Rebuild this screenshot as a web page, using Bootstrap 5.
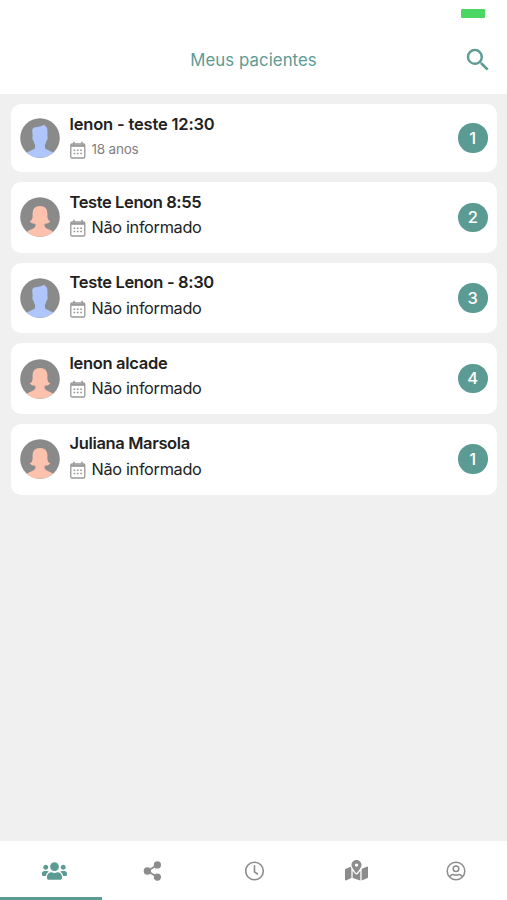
<!DOCTYPE html>
<html lang="pt-BR">
<head>
<meta charset="utf-8">
<meta name="viewport" content="width=device-width, initial-scale=1">
<title>Meus pacientes</title>
<link rel="stylesheet" href="https://cdn.jsdelivr.net/npm/bootstrap@5.3.0/dist/css/bootstrap.min.css">
<style>
:root{--teal:#5c9b93;--ink:#222;--muted:#8c8c8c}
body{font-family:Inter,"Liberation Sans",sans-serif;background:#f0f0f0;color:var(--ink)}
svg{display:block;flex-shrink:0}
.top-area{height:94px}
.charge{width:24px;height:9px;background:#4bd763;border-radius:1px;margin:8.5px 22.5px 0 auto}
.title-bar{height:58px;margin-top:13px;grid-template-columns:60px 1fr 60px}
.title-bar h1{font-size:16.8px;color:var(--teal);letter-spacing:.07px;line-height:22px;padding-top:1px}
.find{margin:1px 14px 0 auto}
.patients{padding:10px 10.5px;gap:9.8px}
.patient{height:70.8px;border-radius:10px;padding:0 9px 0 9.5px}
.patient.short{height:68.2px}
.info{margin-left:9.5px;height:100%;padding-top:8.6px}
.name{font-size:16.5px;line-height:22px;font-weight:600;white-space:nowrap}
.age{font-size:16.3px;line-height:22px;margin-top:3.4px;white-space:nowrap;letter-spacing:-.32px}
.age svg{margin:2px 6px 0 0}
.short .age{font-size:13.5px;color:#808080;margin-top:3px;letter-spacing:-.2px}
.count{width:29.5px;height:29.5px;background:var(--teal);font-size:16.5px;font-weight:500}
.tabs{height:59px;color:var(--muted)}
.tab{width:20%;color:inherit;padding-top:3px}
.tab.current{color:var(--teal)}
.tab-line{height:3px;width:102px;background:var(--teal)}
.n1{letter-spacing:-.17px}.n2{letter-spacing:-.4px}.n3{letter-spacing:-.34px}.n4{letter-spacing:-.31px}.n5{letter-spacing:-.35px}
</style>
<script src="https://cdn.jsdelivr.net/npm/bootstrap@5.3.0/dist/js/bootstrap.bundle.min.js"></script>
</head>
<body>
<svg width="0" height="0" class="position-absolute" aria-hidden="true">
<defs>
<clipPath id="disc"><circle cx="20" cy="20" r="19.8"/></clipPath>
<symbol id="man" viewBox="0 0 40 40"><circle cx="20" cy="20" r="19.8" fill="#8a8a8a"/><path clip-path="url(#disc)" fill="#aec6fc" d="M12.2 12.5Q12.3 9.5 15.5 9.2Q20 9 24.5 6.7Q25 8.6 26.6 9.1Q27.700 10 27.400 18.500Q28.100 19.200 27.500 20.800Q27.300 22.300 26.600 22.600Q26 25 24.900 26.800V29.500Q25.500 31.500 29.500 32.700Q33 33.500 34 36V40H6V36Q7 33.500 10.500 32.700Q14.500 31.500 15.100 29.500V26.800Q14 25 13.400 22.600Q12.700 22.300 12.500 20.800Q11.900 19.200 12.700 18.500Z"/></symbol>
<symbol id="woman" viewBox="0 0 40 40"><circle cx="20" cy="20" r="19.8" fill="#8a8a8a"/><path clip-path="url(#disc)" fill="#fdc2ad" d="M12.600 16Q12.800 8.900 20 8.900Q27.200 8.900 27.400 16V20.500Q27.700 23.200 30.300 24.600Q28.200 27 24.600 26.800V29Q25 31 29 32.500Q32.500 33.500 34 36V40H6V36Q7.500 33.500 11 32.500Q15 31 15.400 29V26.800Q11.800 27 9.700 24.600Q12.300 23.200 12.600 20.500Z"/></symbol>
<symbol id="cal" viewBox="0 0 16 18"><g fill="none" stroke="#999" stroke-width="1.3"><rect x=".8" y="3" width="14" height="14" rx="1.3"/><path d="M1 4.800h14" stroke-width="2"/><path d="M4 .7v3M12 .7v3" stroke-width="1.500"/></g><path stroke="#999" stroke-width="1.500" stroke-dasharray="1.700 1.600" d="M3.600 9.300h9M3.600 12.400h9"/></symbol>
</defs>
</svg>
<div class="d-flex flex-column vh-100 overflow-hidden">
<header class="top-area bg-white flex-shrink-0 d-flex flex-column">
<div class="charge flex-shrink-0"></div>
<div class="title-bar d-grid align-items-center">
<span></span>
<h1 class="m-0 text-center fw-normal">Meus pacientes</h1>
<svg class="find" width="30" height="30" viewBox="0 0 24 24" fill="#5c9b93"><path d="M15.5 14h-.79l-.28-.27A6.47 6.47 0 0 0 16 9.5 6.5 6.5 0 1 0 9.5 16c1.61 0 3.09-.59 4.23-1.57l.27.28v.79l5 4.99L20.49 19zm-6 0C7.01 14 5 11.99 5 9.5S7.01 5 9.5 5 14 7.01 14 9.5 11.99 14 9.5 14"/></svg>
</div>
</header>
<main class="patients d-flex flex-column flex-grow-1">
<article class="patient short bg-white d-flex align-items-center">
<svg width="40" height="40"><use href="#man"/></svg>
<div class="info flex-grow-1"><div class="name"><span class="n1">lenon - teste 12:30</span></div><div class="age d-flex align-items-center"><svg width="16" height="18"><use href="#cal"/></svg><span>18 anos</span></div></div>
<span class="count rounded-circle text-white d-flex align-items-center justify-content-center">1</span>
</article>
<article class="patient bg-white d-flex align-items-center">
<svg width="40" height="40"><use href="#woman"/></svg>
<div class="info flex-grow-1"><div class="name"><span class="n2">Teste Lenon 8:55</span></div><div class="age d-flex align-items-center"><svg width="16" height="18"><use href="#cal"/></svg><span>Não informado</span></div></div>
<span class="count rounded-circle text-white d-flex align-items-center justify-content-center">2</span>
</article>
<article class="patient bg-white d-flex align-items-center">
<svg width="40" height="40"><use href="#man"/></svg>
<div class="info flex-grow-1"><div class="name"><span class="n3">Teste Lenon - 8:30</span></div><div class="age d-flex align-items-center"><svg width="16" height="18"><use href="#cal"/></svg><span>Não informado</span></div></div>
<span class="count rounded-circle text-white d-flex align-items-center justify-content-center">3</span>
</article>
<article class="patient bg-white d-flex align-items-center">
<svg width="40" height="40"><use href="#woman"/></svg>
<div class="info flex-grow-1"><div class="name"><span class="n4">lenon alcade</span></div><div class="age d-flex align-items-center"><svg width="16" height="18"><use href="#cal"/></svg><span>Não informado</span></div></div>
<span class="count rounded-circle text-white d-flex align-items-center justify-content-center">4</span>
</article>
<article class="patient bg-white d-flex align-items-center">
<svg width="40" height="40"><use href="#woman"/></svg>
<div class="info flex-grow-1"><div class="name"><span class="n5">Juliana Marsola</span></div><div class="age d-flex align-items-center"><svg width="16" height="18"><use href="#cal"/></svg><span>Não informado</span></div></div>
<span class="count rounded-circle text-white d-flex align-items-center justify-content-center">1</span>
</article>
</main>
<nav class="tabs bg-white flex-shrink-0 d-flex flex-column">
<div class="d-flex flex-grow-1 align-items-center">
<a class="tab current d-flex justify-content-center ps-2" aria-label="Pacientes"><svg width="25" height="20" viewBox="0 0 640 512" fill="currentColor"><path d="M96 224c35.300 0 64-28.700 64-64s-28.700-64-64-64-64 28.700-64 64 28.700 64 64 64zm448 0c35.300 0 64-28.700 64-64s-28.700-64-64-64-64 28.700-64 64 28.700 64 64 64zm32 32h-64c-17.600 0-33.500 7.100-45.100 18.600 40.300 22.100 68.900 62 75.100 109.400h66c17.700 0 32-14.300 32-32v-32c0-35.300-28.700-64-64-64zm-256 0c61.900 0 112-50.100 112-112S381.900 32 320 32 208 82.100 208 144s50.100 112 112 112zm76.800 32h-8.300c-20.800 10-43.900 16-68.500 16s-47.600-6-68.500-16h-8.300C179.600 288 128 339.600 128 403.200V432c0 26.500 21.500 48 48 48h288c26.500 0 48-21.500 48-48v-28.800c0-63.600-51.600-115.200-115.200-115.200zm-223.700-13.400C161.500 263.100 145.600 256 128 256H64c-35.300 0-64 28.700-64 64v32c0 17.700 14.300 32 32 32h65.900c6.300-47.400 34.900-87.300 75.200-109.400z"/></svg></a>
<a class="tab d-flex justify-content-center" aria-label="Compartilhar"><svg width="20" height="20" viewBox="0 0 20 20" fill="currentColor"><path d="M5.500 10 15.200 4M5.500 10l9.700 6" stroke="currentColor" stroke-width="1.800"/><circle cx="5.400" cy="10" r="3.700"/><circle cx="15.400" cy="3.900" r="3.600"/><circle cx="15.400" cy="16.100" r="3.600"/></svg></a>
<a class="tab d-flex justify-content-center ps-1" aria-label="Horários"><svg width="20" height="20" viewBox="0 0 20 20" fill="none" stroke="currentColor" stroke-width="1.600"><circle cx="9.500" cy="10" r="8.800"/><path d="M9.500 4.800V10.800l3 2.200" stroke-linecap="round" stroke-linejoin="round"/></svg></a>
<a class="tab d-flex justify-content-center ps-1" aria-label="Mapa"><svg width="23" height="20.500" viewBox="0 0 576 512" fill="currentColor"><path d="M288 0c-69.590 0-126 56.410-126 126 0 56.260 82.350 158.800 113.900 196.020 6.390 7.540 17.820 7.540 24.200 0C331.650 284.800 414 182.260 414 126 414 56.410 357.590 0 288 0zm0 168c-23.200 0-42-18.800-42-42s18.800-42 42-42 42 18.800 42 42-18.800 42-42 42zM20.120 215.950A32.006 32.006 0 0 0 0 245.660v250.320c0 11.320 11.430 19.060 21.940 14.860L160 448V214.920c-8.840-15.980-16.070-31.540-21.250-46.420L20.120 215.950zM288 359.670c-14.070 0-27.380-6.180-36.510-16.960-19.660-23.200-40.570-49.620-59.490-76.720v182l192 64V266c-18.920 27.090-39.820 53.520-59.490 76.720-9.130 10.770-22.440 16.950-36.510 16.950zm266.060-198.510L416 224v288l139.880-55.950A31.996 31.996 0 0 0 576 426.340V176.020c0-11.320-11.430-19.060-21.940-14.860z"/></svg></a>
<a class="tab d-flex justify-content-center" aria-label="Perfil"><svg width="20" height="20" viewBox="0 0 20 20" fill="none" stroke="currentColor" stroke-width="1.500"><circle cx="10" cy="10" r="8.800"/><circle cx="10" cy="7.700" r="2.800"/><path d="M3.700 15.500Q6 13.200 7.500 13.700Q10 14.500 12.500 13.700Q14 13.200 16.300 15.500"/></svg></a>
</div>
<div class="tab-line flex-shrink-0"></div>
</nav>
</div>
</body>
</html>
